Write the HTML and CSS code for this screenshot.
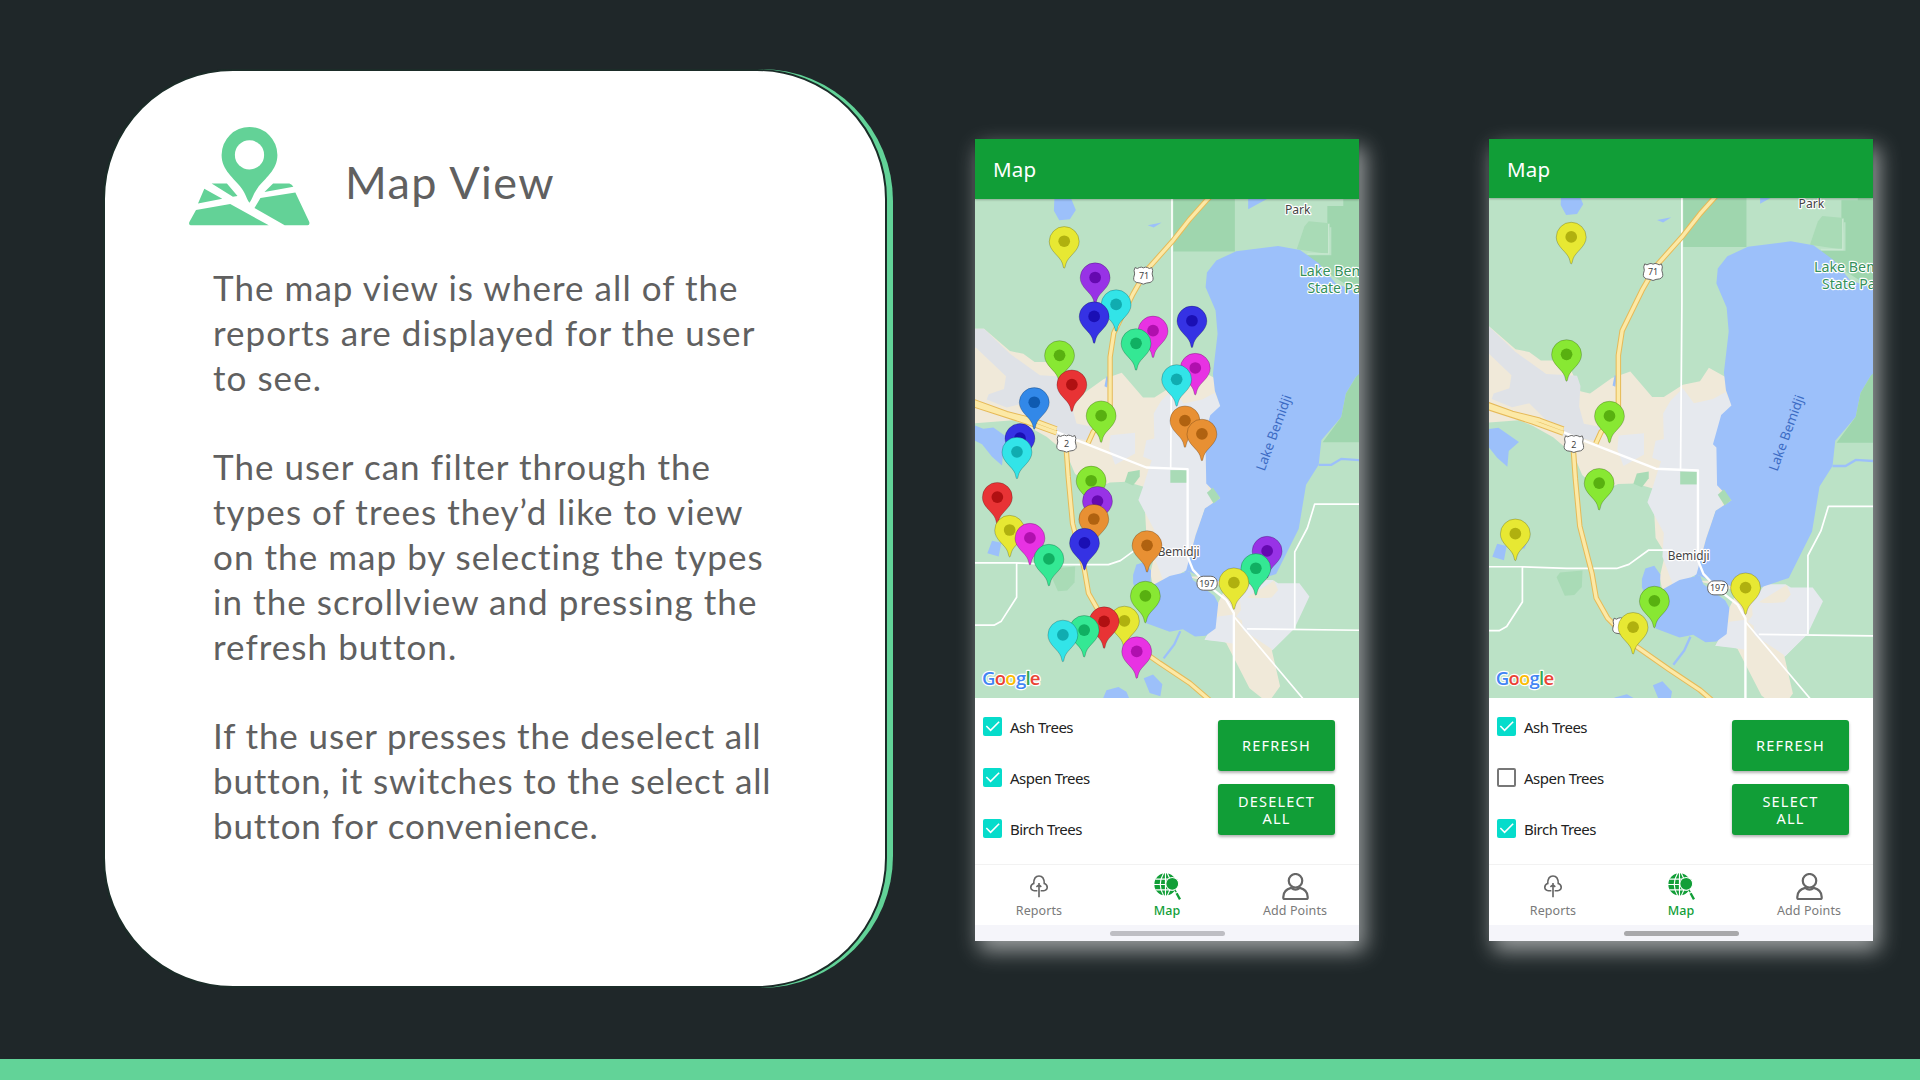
FILE: index.html
```html
<!DOCTYPE html>
<html lang="en">
<head>
<meta charset="utf-8">
<title>Map View</title>
<link rel="stylesheet" href="styles.css">
</head>
<body>
<svg class="defs" aria-hidden="true">
  <defs>
    <symbol id="pin" viewBox="0 0 96 132" overflow="visible">
      <path d="M48 129C45 129 45 122 42 113C35 92 2 76 2 47A46 46 0 0 1 94 47C94 76 61 92 54 113C51 122 51 129 48 129Z" stroke="#000" stroke-opacity=".22" stroke-width="3"/>
      <circle cx="48" cy="46" r="18" fill="currentColor"/>
    </symbol>
    <g id="terrain">
      <rect x="-20" y="180" width="1300" height="1640" fill="#bbe2c6"/>
      <path d="M641 200H826V393H641Z" fill="#9fd6ae"/>
      <path d="M1104 256H1152V200H1260V560L1192 512L1062 430L1040 404H1116V320H1104Z" fill="#9fd6ae"/>
      <path d="M1012 386L1035 318L1048 302L1112 308L1106 400Z" fill="#a9dbb6"/>
      <path d="M1108 310V400H1044" fill="none" stroke="#c8e7d0" stroke-width="4"/>
      <path d="M30 625H72L150 692L190 700L224 725H300L340 815L368 822L432 776L486 757L550 832H584L640 796L690 786L716 746L766 774L840 900L760 1100L790 1140L735 1165L700 1290L660 1370L580 1400L572 1360L588 1290L560 1245L552 1100L500 1085L450 1087L400 1110L345 1060L320 1000L260 950L200 916L160 900L30 910Z" fill="#f0e9d9"/>
      <path d="M30 625H72L150 700L240 765L330 770L340 800L336 860L350 910L400 920L380 960L290 945L240 900L190 850L140 862L80 838L86 822L132 806L138 768L48 682H30Z" fill="#dfe2e7"/>
      <path d="M582 880L604 842L640 806L672 850L728 838L764 818L790 870L740 930L740 1080L756 1150L736 1165L710 1236L694 1290L686 1350L610 1380L580 1300L584 1230L536 1140L552 1095L566 1050L576 1020L550 1010L560 960L584 955Z" fill="#e6e9ee"/>
      <path d="M452 945L526 938V1000L466 1034L448 985Z" fill="#e6e9ee"/>
      <path d="M495 1086L505 1056L540 1050V1070L520 1096Z" fill="#a9dbb6"/>
      <path d="M632 1050H683V1088H632Z" fill="#a9dbb6"/>
      <path d="M846 1430L880 1380H940L956 1390H1020L1050 1430L1005 1526L930 1600L866 1530L800 1565L735 1560L775 1490Z" fill="#e6e9ee"/>
      <path d="M760 1370L830 1400L850 1440L944 1382L956 1410L936 1434L870 1436L830 1490L930 1560L962 1700L926 1750L870 1706L800 1570L736 1530L800 1400L680 1370Z" fill="#f0e9d9"/>
      <path d="M735 1560L775 1490L823 1484V1572L800 1568Z" fill="#e6e9ee"/>
      <path d="M840 1428L880 1436L1018 1430L1000 1530L940 1590L850 1530Z" fill="#e6e9ee"/>
      <path d="M770 420L830 392L956 376L1022 388L1080 430L1130 490L1192 512L1260 545V780L1190 770L1160 820L1146 890L1086 960L1078 1034L1040 1094L1018 1226L950 1362L880 1385L840 1400L720 1370L680 1350L708 1246L736 1165L782 1134L740 1090L738 980L728 970L752 885L782 857L766 812L760 760L774 640L768 570L738 500L742 456Z" fill="#9cc0fa"/>
      <path d="M1260 700L1190 770L1160 820L1146 890L1090 966H1260Z" fill="#9fd6ae"/>
      <path d="M760 1102L782 1134L762 1150L742 1118Z" fill="#a9dbb6"/>
      <path d="M520 1365L530 1334L556 1326L574 1352L572 1400L630 1368L690 1354L700 1380L764 1428L776 1450L768 1526L738 1548L706 1550L670 1528L630 1536L560 1510L548 1450L520 1390Z" fill="#9cc0fa"/>
      <path d="M676 1358L704 1336M662 1534L644 1574L612 1616M1078 1034L1116 1034L1146 1016L1260 1024" fill="none" stroke="#9cc0fa" stroke-width="7"/>
      <path d="M284 220H328L348 268L330 296L298 299L282 270Z M866 220H950L866 266Z M564 314L606 306L582 321Z M440 768L446 770L442 802L434 798Z" fill="#9cc0fa"/>
      <path d="M30 910L70 926L100 922L160 964L130 990L126 1036L96 1010L66 972L30 955Z" fill="#9cc0fa"/>
      <path d="M96 1262L124 1268L116 1310L82 1300Z M164 1264L182 1262L176 1276L164 1274Z M428 1740L440 1712L476 1702L500 1716L510 1740Z M552 1676L580 1664L608 1694L602 1730L570 1720Z M556 1740L580 1710" fill="#9cc0fa"/>
      <path d="M270 1360L280 1346L346 1340L344 1388L322 1412L294 1414Z" fill="#a9dbb6"/>
      <g fill="none" stroke="#fff" stroke-linejoin="round">
        <path d="M637 200V560L633 1046M30 1329H170L300 1334H446L482 1322L540 1280H610M170 1329V1432L124 1504L102 1516H30M1260 1152H1066L1044 1224L1006 1296V1526M862 1527L1260 1532M823 1490L1040 1748" stroke-width="5"/>
        <path d="M290 935L350 960L560 1042L684 1047V1310L700 1350L742 1394L800 1440L823 1480V1800" stroke-width="7"/>
      </g>
      <g fill="none" stroke-linejoin="round">
        <path d="M780 200L740 240L690 296L640 360L560 450L520 520L462 638L451 710V880L400 935L385 968M30 840L140 880L220 900L290 926M30 850L200 905L290 938M318 970L325 1070L338 1210L374 1350L386 1420L420 1480L500 1560L600 1630L690 1690L760 1750" stroke="#e6ba58" stroke-width="16"/>
        <path d="M780 200L740 240L690 296L640 360L560 450L520 520L462 638L451 710V880L400 935L385 968M30 840L140 880L220 900L290 926M30 850L200 905L290 938M318 970L325 1070L338 1210L374 1350L386 1420L420 1480L500 1560L600 1630L690 1690L760 1750" stroke="#fce9a6" stroke-width="10"/>
      </g>
    </g>
    <symbol id="us-shield" viewBox="-31 -27 62 54" overflow="visible">
      <path d="M-25 -24Q-18 -18 -12 -24Q-6 -27 0 -23Q6 -27 12 -24Q18 -18 25 -24L28 -15Q24 -5 29 6Q31 17 20 21Q8 22 0 26Q-8 22 -20 21Q-31 17 -29 6Q-24 -5 -28 -15Z" fill="#fff" stroke="#666" stroke-width="3"/>
    </symbol>
    <symbol id="check" viewBox="0 0 20 20"><path d="M3.5 9.5L8 14L17 5" fill="none" stroke="#fff" stroke-width="1.7"/></symbol>
    <symbol id="tree" viewBox="0 0 54 70">
      <path d="M27 68V24M19 36L27 30L34 36M22 48H13Q2 46 2 37Q3 28 11 26Q11 3 27 3Q43 3 43 26Q51 28 52 37Q52 46 41 48H32" fill="none" stroke="#666" stroke-width="5"/>
    </symbol>
    <symbol id="globe" viewBox="0 0 80 80">
      <circle cx="34" cy="34" r="33" fill="#119e37"/>
      <path d="M34 0V68M0 34H68M4 18H64M4 50H64M29 0Q8 34 29 68M39 0Q60 34 39 68" fill="none" stroke="#fff" stroke-width="3.4"/>
      <circle cx="54" cy="32" r="19" fill="#119e37" stroke="#fff" stroke-width="3"/>
      <path d="M62 50L66 57" stroke="#119e37" stroke-width="4"/>
      <path d="M67 60L77 78" stroke="#119e37" stroke-width="7"/>
    </symbol>
    <symbol id="person" viewBox="0 0 80 80">
      <circle cx="40" cy="23" r="20" fill="none" stroke="#666" stroke-width="6.5"/>
      <path d="M4 75Q2 50 27 44Q40 54 53 44Q78 50 76 75Q76 77 73 77H7Q4 77 4 75Z" fill="none" stroke="#666" stroke-width="6.5"/>
    </symbol>
  </defs>
</svg>

<main class="slide">
  <section class="card">
    <header class="card-head">
      <svg class="logo" viewBox="0 0 364 298">
        <g fill="#63d297">
          <path d="M182 228C174 218 170 200 158 184C136 154 98 130 98 84A84 84 0 0 1 266 84C266 130 228 154 206 184C194 200 190 218 182 228Z"/>
          <path d="M68 170H114L146 208L132 210Z M46 186L100 216L27 230Z M21 250L124 232L240 296H5Q-2 295 1 286Z M253 170H302Q310 172 314 180L227 196Z M215 214L320 197L362 286Q364 295 357 296H288L197 244Z"/>
        </g>
        <circle cx="182" cy="84" r="44" fill="#fff"/>
      </svg>
      <h1>Map View</h1>
    </header>
    <div class="copy">
      <p>The map view is where all of the<br>reports are displayed for the user<br>to see.</p>
      <p>The user can filter through the<br>types of trees they’d like to view<br>on the map by selecting the types<br>in the scrollview and pressing the<br>refresh button.</p>
      <p class="tight">If the user presses the deselect all<br>button, it switches to the select all<br>button for convenience.</p>
    </div>
  </section>

  <section class="phone">
    <div class="appbar">Map</div>
    <svg class="map" viewBox="46 235 1152 1500">
      <use href="#terrain"/>
      <g class="labels">
        <text x="1015" y="280" class="place" textLength="77" lengthAdjust="spacingAndGlyphs">Park</text>
        <text x="1020" y="465" class="park" textLength="256" lengthAdjust="spacingAndGlyphs">Lake Bemidji</text>
        <text x="1044" y="518" class="park" textLength="201" lengthAdjust="spacingAndGlyphs">State Park</text>
        <text class="water" transform="translate(915 1055) rotate(-70)" textLength="240" lengthAdjust="spacingAndGlyphs">Lake Bemidji</text>
        <text x="657" y="1309" class="place" textLength="126" lengthAdjust="spacingAndGlyphs">Bemidji</text>
      </g>
      <use href="#us-shield" x="520" y="438" width="62" height="54"/><text x="553" y="476" class="route">71</text>
      <use href="#us-shield" x="289" y="943" width="62" height="54"/><text x="320" y="981" class="route">2</text>
      <rect x="712" y="1369" width="61" height="42" rx="19" class="sign"/><text x="742" y="1400" class="route">197</text>
      <g class="pins" id="pins-all"></g>
      <g class="google"><text x="66" y="1696" textLength="176"><tspan fill="#4285f4">G</tspan><tspan fill="#ea4335">o</tspan><tspan fill="#fbbc05">o</tspan><tspan fill="#4285f4">g</tspan><tspan fill="#34a853">l</tspan><tspan fill="#ea4335">e</tspan></text></g>
    </svg>
    <div class="panel">
      <ul class="filters">
        <li><span class="box on"><svg><use href="#check"/></svg></span>Ash Trees</li>
        <li><span class="box on"><svg><use href="#check"/></svg></span>Aspen Trees</li>
        <li><span class="box on"><svg><use href="#check"/></svg></span>Birch Trees</li>
      </ul>
      <div class="actions"><button>REFRESH</button><button>DESELECT<br>ALL</button></div>
    </div>
    <nav class="tabs">
      <a><svg class="i-tree"><use href="#tree"/></svg>Reports</a>
      <a class="active"><svg><use href="#globe"/></svg>Map</a>
      <a><svg><use href="#person"/></svg>Add Points</a>
    </nav>
    <div class="gesture"><i></i></div>
  </section>

  <section class="phone second">
    <div class="appbar">Map</div>
    <svg class="map" viewBox="47 232 1152 1503">
      <g transform="translate(-28.3 -24) scale(1.0267)"><use href="#terrain"/></g>
      <g class="labels">
        <text x="1015" y="262" class="place" textLength="77" lengthAdjust="spacingAndGlyphs">Park</text>
        <text x="1023" y="453" class="park" textLength="256" lengthAdjust="spacingAndGlyphs">Lake Bemidji</text>
        <text x="1047" y="507" class="park" textLength="201" lengthAdjust="spacingAndGlyphs">State Park</text>
        <text class="water" transform="translate(912 1056) rotate(-70)" textLength="240" lengthAdjust="spacingAndGlyphs">Lake Bemidji</text>
        <text x="646" y="1320" class="place" textLength="126" lengthAdjust="spacingAndGlyphs">Bemidji</text>
      </g>
      <use href="#us-shield" x="508" y="427" width="62" height="54"/><text x="539" y="464" class="route">71</text>
      <use href="#us-shield" x="270" y="944" width="62" height="54"/><text x="301" y="983" class="route">2</text>
      <use href="#us-shield" x="416" y="1492" width="62" height="54"/>
      <rect x="703" y="1383" width="61" height="42" rx="19" class="sign"/><text x="733" y="1414" class="route">197</text>
      <g class="pins" id="pins-some"></g>
      <g class="google"><text x="66" y="1696" textLength="176"><tspan fill="#4285f4">G</tspan><tspan fill="#ea4335">o</tspan><tspan fill="#fbbc05">o</tspan><tspan fill="#4285f4">g</tspan><tspan fill="#34a853">l</tspan><tspan fill="#ea4335">e</tspan></text></g>
    </svg>
    <div class="panel">
      <ul class="filters">
        <li><span class="box on"><svg><use href="#check"/></svg></span>Ash Trees</li>
        <li><span class="box"></span>Aspen Trees</li>
        <li><span class="box on"><svg><use href="#check"/></svg></span>Birch Trees</li>
      </ul>
      <div class="actions"><button>REFRESH</button><button>SELECT<br>ALL</button></div>
    </div>
    <nav class="tabs">
      <a><svg class="i-tree"><use href="#tree"/></svg>Reports</a>
      <a class="active"><svg><use href="#globe"/></svg>Map</a>
      <a><svg><use href="#person"/></svg>Add Points</a>
    </nav>
    <div class="gesture"><i></i></div>
  </section>
</main>
<footer class="strip"></footer>
<script src="pins.js"></script>
</body>
</html>
```
FILE: styles.css
```css
* { box-sizing: border-box; }
body {
  margin: 0;
  width: 1920px;
  height: 1080px;
  overflow: hidden;
  display: flex;
  flex-direction: column;
  background: #1f2729;
  font-family: "Noto Sans", Roboto, sans-serif;
}
.defs { position: absolute; width: 0; height: 0; }
.slide {
  flex: 1;
  display: flex;
  align-items: flex-start;
  padding-left: 103px;
}
.strip { height: 21px; background: #62d398; }

.card {
  position: relative;
  width: 784px;
  height: 919px;
  margin: 69px 88px 0 0;
  padding: 56px 0 0 84px;
  border: 2px solid #1b2c28;
  border-radius: 130px;
  background: #fff;
  background-clip: padding-box;
  isolation: isolate;
}
.card::before {
  content: "";
  position: absolute;
  z-index: -2;
  inset: -2px -8px -2px 30px;
  border-radius: 132px;
  background: #62d398;
}
.card::after {
  content: "";
  position: absolute;
  z-index: -1;
  inset: -2px;
  border: 2px solid #1b2c28;
  border-radius: 130px;
  background: #fff;
}
.card-head { display: flex; gap: 35px; }
.logo { width: 121px; height: 99px; display: block; }
h1 {
  margin: 25px 0 0;
  font: 400 45px/60px Lato, sans-serif;
  letter-spacing: 1.4px;
  color: #606060;
}
.copy {
  margin: 39px 0 0 24px;
  font: 400 35px/44.85px Lato, sans-serif;
  letter-spacing: 1.05px;
  color: #606060;
  white-space: nowrap;
}
.copy p { margin: 0 0 44.85px; }
.copy .tight { letter-spacing: .88px; }

.phone {
  width: 384px;
  height: 802px;
  margin-top: 139px;
  display: flex;
  flex-direction: column;
  background: #fff;
  box-shadow: 5px 9px 20px 1px rgba(255, 255, 255, .55);
}
.second { margin-left: 130px; }
.appbar {
  height: 60px;
  padding: 0 0 0 18px;
  display: flex;
  align-items: center;
  background: #119e37;
  box-shadow: 0 1px 2px rgba(0, 0, 0, .25);
  z-index: 1;
  color: #fff;
  font-size: 20.5px;
  letter-spacing: .2px;
}
.second .appbar { height: 59px; }
.map { flex: 1; min-height: 0; width: 384px; display: block; overflow: hidden; }
.labels text { paint-order: stroke; stroke: #fff; stroke-width: 7px; stroke-linejoin: round; }
.labels .place { font-size: 37px; text-anchor: middle; fill: #444; }
.labels .park { font-size: 44px; fill: #34905a; }
.labels .water { font-size: 40px; fill: #3c6cc4; stroke: none; }
.route { font-size: 27px; text-anchor: middle; fill: #444; }
.sign { fill: #fff; stroke: #666; stroke-width: 3px; }
.google text {
  font: 600 56px "Open Sans", sans-serif;
  paint-order: stroke;
  stroke: #fff;
  stroke-width: 7px;
  stroke-linejoin: round;
}

.panel {
  height: 166px;
  padding: 19px 24px 0 8px;
  display: flex;
  justify-content: space-between;
}
.filters { list-style: none; margin: 0; padding: 0; color: #222; font-size: 15px; letter-spacing: -.5px; }
.filters li { height: 51.2px; display: flex; align-items: flex-start; gap: 8px; line-height: 20px; }
.box { width: 19px; height: 19px; border: 2px solid #777; border-radius: 2px; }
.box.on { border: 0; background: #06dccb; }
.box svg { width: 19px; height: 19px; display: block; }
.actions { display: flex; flex-direction: column; gap: 13px; padding-top: 3px; }
.actions button {
  width: 117px;
  height: 51px;
  padding: 1px 0 0;
  border: 0;
  border-radius: 3px;
  background: #119e37;
  box-shadow: 0 2px 3px rgba(0, 0, 0, .3);
  color: #fff;
  font: 400 14.5px/17.3px "Noto Sans", sans-serif;
  letter-spacing: 1.2px;
}
.tabs {
  height: 61px;
  display: grid;
  grid-template-columns: repeat(3, 1fr);
  border-top: 1px solid #f2f2f2;
}
.tabs a {
  display: flex;
  flex-direction: column;
  align-items: center;
  padding-top: 8px;
  color: #7a7a7a;
  font-size: 12.5px;
  line-height: 19px;
  letter-spacing: .1px;
}
.tabs svg { width: 27px; height: 27px; margin-bottom: 1px; }
.tabs .i-tree { width: 18px; height: 23px; margin: 2px 0 3px; }
.tabs .active { color: #119e37; font-weight: 500; }
.gesture { height: 16px; padding-top: 6px; background: #f5f5fa; }
.gesture i { display: block; width: 115px; height: 5px; margin: 0 0 0 135px; border-radius: 3px; background: #bebec3; }
.second .gesture i { background: #a9a9ab; }
```
FILE: pins.js
```js
// Body and dot colour of each tree type.
const colors = {
  yellow: ['#e7e833', '#b0b00f'], violet: ['#9832e6', '#6509b0'], cyan: ['#32e4e8', '#10acb0'],
  blue: ['#3532e4', '#1a0fb4'], magenta: ['#e832e3', '#b00fae'], mint: ['#34e894', '#10b062'],
  lime: ['#88e833', '#58b010'], red: ['#e83335', '#b01012'], azure: ['#3288e8', '#0f5ab0'],
  orange: ['#e89033', '#b06210']
};

// Each pin: centre x, top y, colour; later pins are drawn on top.
const allPins = [
  [313, 317, 'yellow'], [406, 426, 'violet'], [469, 507, 'cyan'], [403, 543, 'blue'],
  [697, 556, 'blue'], [580, 586, 'magenta'], [529, 624, 'mint'], [299, 660, 'lime'],
  [707, 698, 'magenta'], [651, 732, 'cyan'], [336, 748, 'red'], [223, 801, 'azure'],
  [424, 841, 'lime'], [676, 856, 'orange'], [727, 896, 'orange'], [180, 909, 'blue'],
  [171, 950, 'cyan'], [394, 1037, 'lime'], [112, 1086, 'red'], [413, 1098, 'violet'],
  [402, 1152, 'orange'], [149, 1185, 'yellow'], [210, 1209, 'magenta'], [374, 1224, 'blue'],
  [562, 1231, 'orange'], [923, 1248, 'violet'], [267, 1272, 'mint'], [889, 1300, 'mint'],
  [823, 1343, 'yellow'], [557, 1383, 'lime'], [494, 1458, 'yellow'], [433, 1460, 'red'],
  [373, 1486, 'mint'], [309, 1500, 'cyan'], [531, 1550, 'magenta']
];

const somePins = [
  [293, 304, 'yellow'], [279, 657, 'lime'], [408, 842, 'lime'], [377, 1044, 'lime'],
  [125, 1196, 'yellow'], [817, 1358, 'yellow'], [543, 1398, 'lime'], [479, 1477, 'yellow']
];

function draw(id, pins) {
  document.getElementById(id).innerHTML = pins.map(([x, y, c]) =>
    `<use href="#pin" x="${x - 47}" y="${y}" width="94" height="129" fill="${colors[c][0]}" color="${colors[c][1]}"/>`
  ).join('');
}

draw('pins-all', allPins);
draw('pins-some', somePins);
```
